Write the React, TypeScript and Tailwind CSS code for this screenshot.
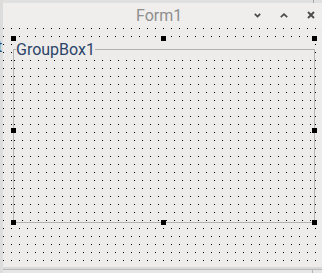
import React from 'react';

const Handle: React.FC<{ className: string }> = ({ className }) => (
  <div className={`absolute w-[5px] h-[5px] bg-black ${className}`} />
);

const App: React.FC = () => {
  return (
    <div className="w-[322px] h-[273px] overflow-hidden flex bg-[#dcdcdc] font-[Roboto,sans-serif]">
      {/* strip left of the form window */}
      <div className="w-[3px] shrink-0 overflow-hidden">
        <div className="mt-[39px] -ml-[3px] text-[16px] leading-[16px] text-[#2b4468]">t</div>
      </div>

      <div className="w-[330px] shrink-0 flex flex-col">
        {/* top edge */}
        <div className="h-[3px] bg-[#e0e0e0] flex">
          <div className="ml-[310px] w-px bg-[#a9a9a9]" />
        </div>

        {/* Title bar */}
        <div className="h-[25px] bg-[#efeeed] flex items-center">
          <span className="ml-[133px] w-[118px] text-[16px] leading-[25px] text-[#8e8e8e]">Form1</span>
          <svg width="7" height="5" viewBox="0 0 7 5">
            <path d="M0.8 0.8 L3.5 3.6 L6.2 0.8" stroke="#4a4a4a" strokeWidth="1.7" fill="none" />
          </svg>
          <svg className="ml-[19px]" width="8" height="5" viewBox="0 0 8 5">
            <path d="M0.8 4.2 L4 1.2 L7.2 4.2" stroke="#4a4a4a" strokeWidth="1.7" fill="none" />
          </svg>
          <svg className="ml-[19px] -mt-[1px]" width="8" height="8" viewBox="0 0 8 8">
            <path d="M1 1 L7 7 M7 1 L1 7" stroke="#4a4a4a" strokeWidth="1.8" fill="none" />
          </svg>
        </div>

        {/* Form client area with design grid (1px dot every 8px) */}
        <div className="h-[239px] flex flex-col bg-[linear-gradient(to_right,transparent_1px,#edeceb_1px),linear-gradient(#000_1px,#edeceb_1px)] bg-size-[8px_8px]">
          {/* GroupBox1 (selected) */}
          <div className="relative ml-[10px] mt-[10px] w-[302px] h-[185px] pt-[11px] flex flex-col bg-[#edeceb]">
            <div className="flex-1 flex flex-col border border-[#b3b3b3]">
              <div className="-mt-[11px] ml-[2px] self-start h-[21px] leading-[21px] text-[16px] text-[#2b4468] bg-[#edeceb]">
                GroupBox1
              </div>
              <div className="flex-1 bg-[linear-gradient(to_right,transparent_1px,#edeceb_1px),linear-gradient(#000_1px,#edeceb_1px)] bg-size-[8px_8px]" />
            </div>

            <Handle className="-left-[2px] -top-[2px]" />
            <Handle className="left-[148px] -top-[2px]" />
            <Handle className="left-[299px] -top-[2px]" />
            <Handle className="-left-[2px] top-[90px]" />
            <Handle className="left-[299px] top-[90px]" />
            <Handle className="-left-[2px] top-[182px]" />
            <Handle className="left-[148px] top-[182px]" />
            <Handle className="left-[299px] top-[182px]" />
          </div>
        </div>

        {/* bottom edge */}
        <div className="h-[2px] bg-[#d9d9d9]" />
        <div className="h-px bg-[#b9b9b9]" />
        <div className="h-[3px] bg-[#e6e6e6] flex">
          <div className="ml-[309px] w-px bg-[#b9b9b9]" />
        </div>
      </div>
    </div>
  );
};

export default App;
